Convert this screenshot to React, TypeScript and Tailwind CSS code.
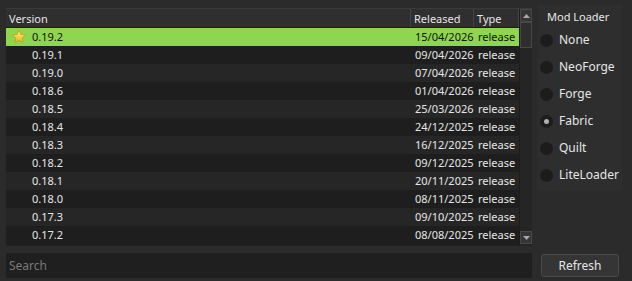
import React from "react";

const versions = [
  { v: "0.19.2", date: "15/04/2026", star: true },
  { v: "0.19.1", date: "09/04/2026" },
  { v: "0.19.0", date: "07/04/2026" },
  { v: "0.18.6", date: "01/04/2026" },
  { v: "0.18.5", date: "25/03/2026" },
  { v: "0.18.4", date: "24/12/2025" },
  { v: "0.18.3", date: "16/12/2025" },
  { v: "0.18.2", date: "09/12/2025" },
  { v: "0.18.1", date: "20/11/2025" },
  { v: "0.18.0", date: "08/11/2025" },
  { v: "0.17.3", date: "09/10/2025" },
  { v: "0.17.2", date: "08/08/2025" },
];

const loaders = ["None", "NeoForge", "Forge", "Fabric", "Quilt", "LiteLoader"];

const Star = () => (
  <svg width="16" height="16" viewBox="0 0 16 16">
    <defs>
      <linearGradient id="st" x1="0" y1="0" x2="0" y2="1">
        <stop offset="0" stopColor="#fff27a" />
        <stop offset="1" stopColor="#e0b820" />
      </linearGradient>
    </defs>
    <path
      d="M8 1.3 L9.9 5.4 L14.4 5.9 L11.1 9 L12 13.6 L8 11.3 L4 13.6 L4.9 9 L1.6 5.9 L6.1 5.4 Z"
      fill="url(#st)"
      stroke="#c9a21a"
      strokeWidth="0.9"
      strokeLinejoin="round"
    />
  </svg>
);

const Arrow = ({ up }: { up?: boolean }) => (
  <svg width="7" height="4" viewBox="0 0 7 4">
    <path d={up ? "M0 4 L3.5 0 L7 4 Z" : "M0 0 L3.5 4 L7 0 Z"} fill="#a8a8a8" />
  </svg>
);

export default function App() {
  return (
    <div
      className="w-[632px] h-[281px] bg-[#2b2b2b] flex pl-[6px] pt-[8px] text-[11px] text-[#e6e6e6] overflow-hidden"
      style={{ fontFamily: '"Noto Sans", "Open Sans", sans-serif' }}
    >
      <div className="w-[526px] flex flex-col">
        <div className="h-[238px] flex bg-[#1f1f1f] border-t border-[#3a3a3a]">
          <div className="w-[513px] flex flex-col">
            <div className="h-[19px] flex bg-[#2f2f2f] border-b border-[#1c1c1c] leading-[19px]">
              <div className="w-[405px] pl-[3px] border-r border-[#444]">Version</div>
              <div className="w-[63px] pl-[3px] border-r border-[#444]">Released</div>
              <div className="w-[45px] pl-[3px] border-r border-[#444]">Type</div>
            </div>
            {versions.map((r, i) => (
              <div
                key={r.v}
                className={`h-[18px] flex items-center leading-[18px] ${
                  r.star ? "bg-[#8fd650] text-[#111]" : i % 2 === 1 ? "bg-[#1e1e1e]" : "bg-[#262626]"
                }`}
              >
                <div className="w-[405px] flex items-center pl-[5px]">
                  <div className="w-[16px] h-[16px] mr-[5px]">{r.star && <Star />}</div>
                  {r.v}
                </div>
                <div className="w-[63px] pl-[4px]">{r.date}</div>
                <div className="w-[45px] pl-[4px]">release</div>
              </div>
            ))}
          </div>
          <div className="w-[13px] flex flex-col bg-[#252525] border-l border-[#1c1c1c]">
            <div className="h-[13px] flex items-center justify-center bg-[#353535] border border-[#484848]">
              <Arrow up />
            </div>
            <div className="h-[26px] bg-[#2e2e2e] border border-[#474747]" />
            <div className="flex-1" />
            <div className="h-[13px] flex items-center justify-center bg-[#353535] border border-[#484848] mb-[2px]">
              <Arrow />
            </div>
          </div>
        </div>
        <div className="mt-[7px] h-[25px] bg-[#1f1f1f] flex items-center pl-[3px] text-[#7a7a7a] text-[12px]">
          Search
        </div>
      </div>
      <div className="w-[84px] ml-[6px] flex flex-col">
        <div className="h-[186px] bg-[#2e2e2e] -mt-[3px] pt-[3px]">
          <div className="pl-[9px] h-[17px] leading-[17px]">Mod Loader</div>
          <div className="flex flex-col mt-[7px] gap-[11px]">
            {loaders.map((l) => (
              <div key={l} className="h-[16px] flex items-center">
                <div className="w-[13px] h-[13px] rounded-full bg-[#1c1c1c] flex items-center justify-center ml-[2px]">
                  {l === "Fabric" && <div className="w-[5px] h-[5px] rounded-full bg-[#b0b0b0]" />}
                </div>
                <span className="ml-[6px] text-[12px]">{l}</span>
              </div>
            ))}
          </div>
        </div>
        <div className="mt-[63px] ml-[3px] w-[78px] h-[23px] rounded-[3px] bg-[#353535] border border-[#4a4a4a] flex items-center justify-center text-[12px]">
          Refresh
        </div>
      </div>
    </div>
  );
}
